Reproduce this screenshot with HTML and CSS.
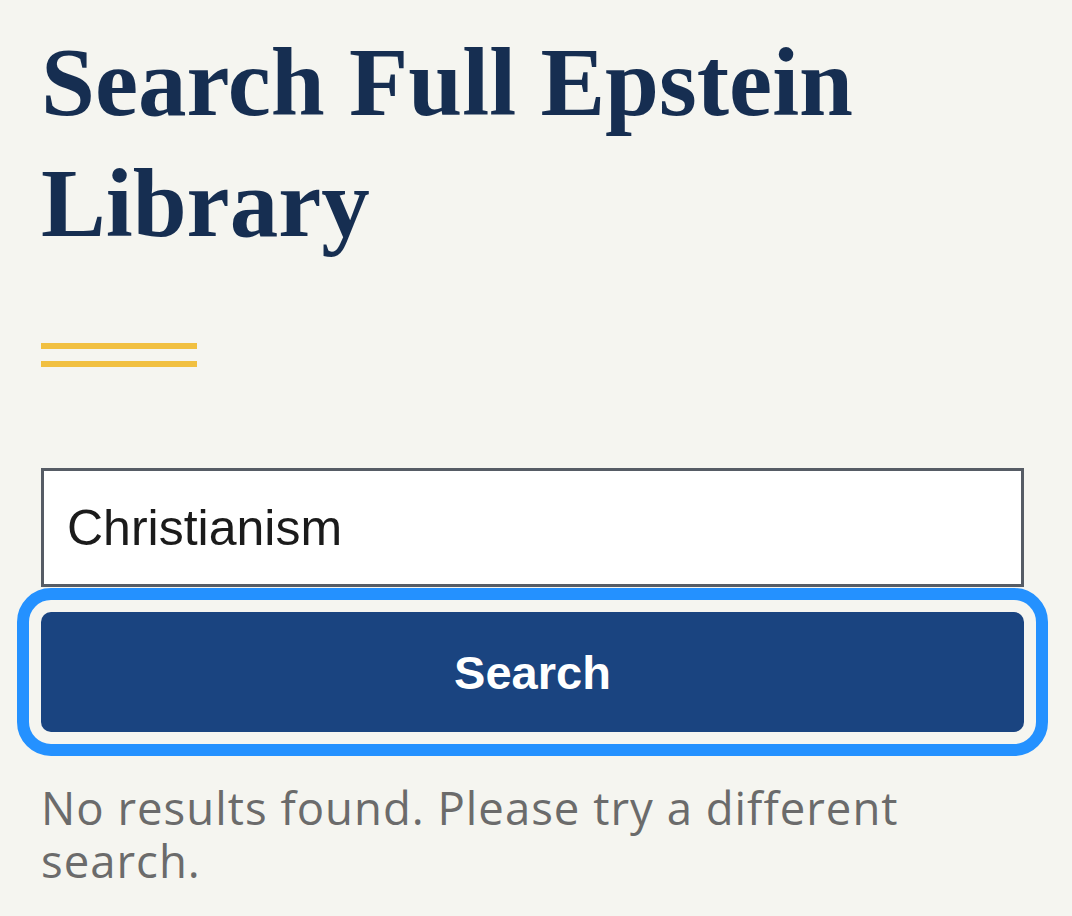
FILE: index.html
```html
<!DOCTYPE html>
<html lang="en">
<head>
<meta charset="utf-8">
<title>Search Full Epstein Library</title>
<link rel="stylesheet" href="styles.css">
</head>
<body>
<main class="page">
  <h1 class="title">Search Full Epstein Library</h1>
  <div class="rule"></div>
  <form class="search-form">
    <input class="search-input" type="text" value="Christianism" aria-label="Search">
    <button class="search-button" type="button">Search</button>
  </form>
  <p class="message">No results found. Please try a different search.</p>
</main>
</body>
</html>
```
FILE: styles.css
```css
html, body {
  margin: 0;
  padding: 0;
  background: #f5f5f0;
}

.page {
  padding: 22px 48px 0 41px;
}

.title {
  margin: 0;
  font-family: "Liberation Serif", "Times New Roman", serif;
  font-weight: 700;
  font-size: 97px;
  line-height: 121px;
  color: #162e51;
}

.rule {
  margin-top: 79px;
  width: 156px;
  height: 12px;
  border-top: 6px solid #f1c041;
  border-bottom: 6px solid #f1c041;
}

.search-form {
  margin-top: 101px;
  display: flex;
  flex-direction: column;
  gap: 25px;
}

.search-input {
  box-sizing: border-box;
  width: 100%;
  height: 119px;
  margin: 0;
  padding: 0 23px;
  border: 3px solid #565c65;
  border-radius: 0;
  background: #ffffff;
  font-family: "Liberation Sans", Arial, sans-serif;
  font-size: 50px;
  color: #1b1b1b;
  outline: none;
}

.search-button {
  box-sizing: border-box;
  width: 100%;
  height: 120px;
  margin: 0;
  border: 0;
  border-radius: 10px;
  background: #1a4480;
  color: #ffffff;
  font-family: "Liberation Sans", Arial, sans-serif;
  font-weight: 700;
  font-size: 47px;
  outline: 12px solid #2491ff;
  outline-offset: 12px;
}

.message {
  margin: 49px 0 0;
  font-family: "Open Sans", "Liberation Sans", sans-serif;
  font-size: 45.5px;
  letter-spacing: 1px;
  line-height: 53px;
  color: #6b6b6b;
}
```
